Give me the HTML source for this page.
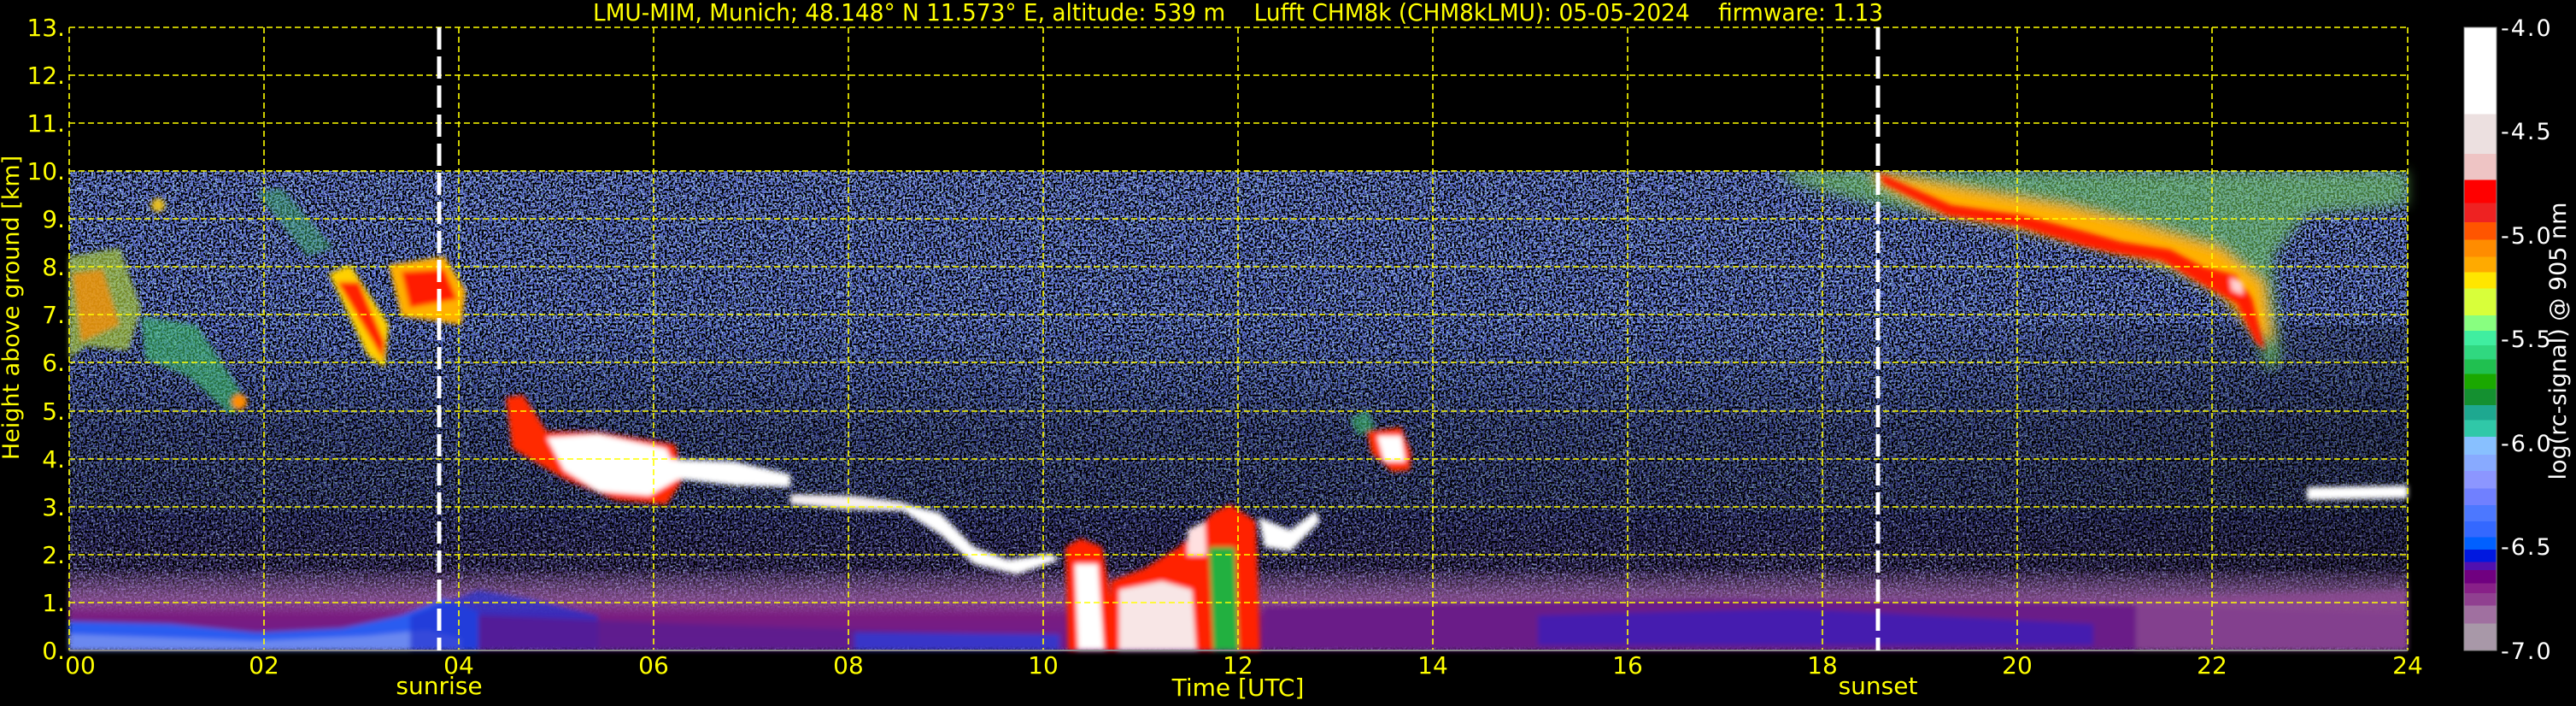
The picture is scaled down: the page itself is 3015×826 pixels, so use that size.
<!DOCTYPE html>
<html><head><meta charset="utf-8"><style>
html,body{margin:0;padding:0;background:#000;}
svg{display:block;}
text{font-family:"DejaVu Sans","Liberation Sans",sans-serif;fill:#ffff00;}
</style></head><body>
<svg width="3015" height="826" viewBox="0 0 3015 826" xmlns="http://www.w3.org/2000/svg">
<defs>
<linearGradient id="bg" x1="0" y1="200" x2="0" y2="761" gradientUnits="userSpaceOnUse">
<stop offset="0" stop-color="#5868c8"/><stop offset="0.45" stop-color="#4c5cc0"/>
<stop offset="0.72" stop-color="#3a3c90"/><stop offset="0.86" stop-color="#4a3478"/>
<stop offset="1" stop-color="#4a3478"/></linearGradient>
<linearGradient id="dk" x1="0" y1="380" x2="0" y2="720" gradientUnits="userSpaceOnUse">
<stop offset="0" stop-color="#000" stop-opacity="0"/><stop offset="0.35" stop-color="#000" stop-opacity="0.25"/>
<stop offset="0.8" stop-color="#000" stop-opacity="0.25"/><stop offset="1" stop-color="#000" stop-opacity="0"/></linearGradient>
<linearGradient id="dk2" x1="2150" y1="0" x2="2818" y2="0" gradientUnits="userSpaceOnUse">
<stop offset="0" stop-color="#000" stop-opacity="0"/><stop offset="1" stop-color="#000" stop-opacity="0.25"/></linearGradient>
<linearGradient id="cb" x1="0" y1="32" x2="0" y2="761" gradientUnits="userSpaceOnUse">
<stop offset="0" stop-color="#fff"/><stop offset=".139" stop-color="#fff"/>
<stop offset=".139" stop-color="#ece0e0"/><stop offset=".203" stop-color="#ece0e0"/>
<stop offset=".203" stop-color="#eec4c4"/><stop offset=".245" stop-color="#eec4c4"/>
<stop offset=".245" stop-color="#ff0000"/><stop offset=".282" stop-color="#ff0000"/>
<stop offset=".282" stop-color="#ee2222"/><stop offset=".313" stop-color="#ee2222"/>
<stop offset=".313" stop-color="#ff5500"/><stop offset=".341" stop-color="#ff5500"/>
<stop offset=".341" stop-color="#ff8c00"/><stop offset=".368" stop-color="#ff8c00"/>
<stop offset=".368" stop-color="#ffaa00"/><stop offset=".393" stop-color="#ffaa00"/>
<stop offset=".393" stop-color="#ffe600"/><stop offset=".419" stop-color="#ffe600"/>
<stop offset=".419" stop-color="#d8ff3a"/><stop offset=".462" stop-color="#d8ff3a"/>
<stop offset=".462" stop-color="#88ff80"/><stop offset=".487" stop-color="#88ff80"/>
<stop offset=".487" stop-color="#40eea0"/><stop offset=".510" stop-color="#40eea0"/>
<stop offset=".510" stop-color="#30d880"/><stop offset=".533" stop-color="#30d880"/>
<stop offset=".533" stop-color="#20c050"/><stop offset=".556" stop-color="#20c050"/>
<stop offset=".556" stop-color="#1aa800"/><stop offset=".580" stop-color="#1aa800"/>
<stop offset=".580" stop-color="#149030"/><stop offset=".606" stop-color="#149030"/>
<stop offset=".606" stop-color="#1ea890"/><stop offset=".630" stop-color="#1ea890"/>
<stop offset=".630" stop-color="#30c8a8"/><stop offset=".657" stop-color="#30c8a8"/>
<stop offset=".657" stop-color="#88c0ff"/><stop offset=".686" stop-color="#88c0ff"/>
<stop offset=".686" stop-color="#88aaff"/><stop offset=".712" stop-color="#88aaff"/>
<stop offset=".712" stop-color="#8c96ff"/><stop offset=".740" stop-color="#8c96ff"/>
<stop offset=".740" stop-color="#7080ff"/><stop offset=".767" stop-color="#7080ff"/>
<stop offset=".767" stop-color="#4c78ff"/><stop offset=".793" stop-color="#4c78ff"/>
<stop offset=".793" stop-color="#3468ff"/><stop offset=".818" stop-color="#3468ff"/>
<stop offset=".818" stop-color="#0060ff"/><stop offset=".838" stop-color="#0060ff"/>
<stop offset=".838" stop-color="#0018e0"/><stop offset=".858" stop-color="#0018e0"/>
<stop offset=".858" stop-color="#5010b0"/><stop offset=".871" stop-color="#5010b0"/>
<stop offset=".871" stop-color="#700080"/><stop offset=".892" stop-color="#700080"/>
<stop offset=".892" stop-color="#882088"/><stop offset=".908" stop-color="#882088"/>
<stop offset=".908" stop-color="#904090"/><stop offset=".928" stop-color="#904090"/>
<stop offset=".928" stop-color="#a070a0"/><stop offset=".957" stop-color="#a070a0"/>
<stop offset=".957" stop-color="#a898a8"/><stop offset="1" stop-color="#a898a8"/>
</linearGradient>
<linearGradient id="bl" x1="0" y1="660" x2="0" y2="761" gradientUnits="userSpaceOnUse">
<stop offset="0" stop-color="#9a70a8" stop-opacity="0"/><stop offset="0.4" stop-color="#9a5aa0" stop-opacity="0.75"/>
<stop offset="0.6" stop-color="#7a1a80"/><stop offset="1" stop-color="#6a1a90"/></linearGradient>
<filter id="blk" x="0" y="0" width="100%" height="100%">
<feTurbulence type="fractalNoise" baseFrequency="0.42" numOctaves="1" seed="4"/>
<feColorMatrix type="matrix" values="0 0 0 0 0  0 0 0 0 0  0 0 0 0 0  -12 0 0 0 6.2"/></filter>
<filter id="blu" x="0" y="0" width="100%" height="100%">
<feTurbulence type="fractalNoise" baseFrequency="0.45" numOctaves="1" seed="11"/>
<feColorMatrix type="matrix" values="0 0 0 0 0.45  0 0 0 0 0.6  0 0 0 0 1  12 0 0 0 -6.6"/></filter>
<filter id="grn" x="0" y="0" width="100%" height="100%">
<feTurbulence type="fractalNoise" baseFrequency="0.5" numOctaves="1" seed="23"/>
<feColorMatrix type="matrix" values="0 0 0 0 0.3  0 0 0 0 0.85  0 0 0 0 0.5  14 0 0 0 -8.4"/></filter>
<filter id="blr"><feGaussianBlur stdDeviation="3"/></filter>
<filter id="blr2"><feGaussianBlur stdDeviation="7"/></filter>
</defs>

<rect x="81" y="200" width="2737" height="561" fill="url(#bg)"/>
<rect x="81" y="200" width="2737" height="561" filter="url(#blu)" opacity="0.8"/>
<rect x="81" y="200" width="2737" height="400" filter="url(#grn)" opacity="0.6"/>
<rect x="81" y="200" width="2737" height="561" filter="url(#blk)"/>
<rect x="81" y="380" width="2737" height="340" fill="url(#dk)"/>
<rect x="2150" y="380" width="668" height="330" fill="url(#dk2)"/>
<g filter="url(#blr)">
<rect x="81" y="668" width="2737" height="93" fill="url(#bl)"/>
<path d="M81 727 L200 730 L300 740 L400 735 L470 720 L520 700 L560 715 L560 761 L81 761Z" fill="#2a5cf0"/>
<path d="M81 742 L300 750 L430 744 L500 737 L540 747 L540 761 L81 761Z" fill="#6a88f0"/>
<path d="M480 720 L560 690 L620 700 L700 720 L700 761 L480 761Z" fill="#2030d0" opacity="0.7"/>
<path d="M560 720 L800 730 L1100 740 L1240 745 L1240 761 L560 761Z" fill="#5a1a90" opacity="0.8"/>
<path d="M1000 740 L1240 742 L1240 761 L1000 761Z" fill="#2a40e0" opacity="0.7"/>
<path d="M1480 710 L2000 700 L2400 705 L2818 720 L2818 761 L1480 761Z" fill="#6a1a88"/>
<path d="M1800 720 L2100 712 L2450 730 L2450 755 L1800 755Z" fill="#3420c0" opacity="0.7"/>
<path d="M2500 700 L2818 690 L2818 761 L2500 761Z" fill="#8a4a90" opacity="0.8"/>
</g>
<g filter="url(#blr)">
<path d="M81 300 L140 290 L165 360 L150 410 L100 405 L81 420Z" fill="#a8c840" opacity="0.7"/>
<path d="M85 320 L120 315 L140 380 L95 400Z" fill="#ff8a00" opacity="0.7"/>
<path d="M165 370 L230 380 L290 470 L270 485 L220 440 L170 420Z" fill="#40c070" opacity="0.6"/>
<circle cx="280" cy="470" r="9" fill="#ff8c00"/>
<path d="M300 225 L330 220 L390 290 L360 300Z" fill="#40b070" opacity="0.5"/>
<circle cx="185" cy="240" r="8" fill="#e8c020"/>
<path d="M385 320 L410 310 L455 380 L450 430 L430 415Z" fill="#ffd000"/>
<path d="M395 330 L420 330 L450 400 L448 420Z" fill="#ff2000"/>
<path d="M455 310 L520 300 L545 340 L540 380 L470 370Z" fill="#ffb000"/>
<path d="M470 318 L520 315 L535 350 L480 360Z" fill="#ff1a00"/>
<path d="M592 465 L612 462 L640 505 L700 505 L790 520 L800 560 L780 590 L720 585 L660 560 L600 525Z" fill="#ff2a00"/>
<path d="M640 512 L700 508 L780 525 L795 560 L760 580 L700 575 L660 550Z" fill="#ffffff"/>
<path d="M780 537 L860 540 L925 555 L925 570 L860 568 L790 560Z" fill="#ffffff"/>
<path d="M925 578 L1000 580 L1060 588 L1060 598 L990 596 L925 590Z" fill="#f6f0f0"/>
<path d="M1060 590 L1100 600 L1140 640 L1180 655 L1230 648 L1240 655 L1190 672 L1140 660 L1100 625 L1060 600Z" fill="#ffffff"/>
<path d="M1247 640 L1265 630 L1290 640 L1300 700 L1305 761 L1250 761Z" fill="#ff2000"/>
<path d="M1258 660 L1285 660 L1292 760 L1262 760Z" fill="#ffffff"/>
<path d="M1300 680 L1340 665 L1380 640 L1420 600 L1440 590 L1470 610 L1475 761 L1300 761Z" fill="#ff2000"/>
<path d="M1310 690 L1360 680 L1395 690 L1400 761 L1310 761Z" fill="#f8e6e6"/>
<path d="M1390 620 L1410 610 L1412 650 L1390 650Z" fill="#ffe0e0"/>
<path d="M1415 640 L1445 640 L1450 761 L1420 761Z" fill="#20b040"/>
<path d="M1473 605 L1510 620 L1540 598 L1545 610 L1510 645 L1480 640Z" fill="#ffffff"/>
<path d="M1600 505 L1640 500 L1652 530 L1650 550 L1630 552 L1605 530Z" fill="#ff3000"/>
<path d="M1612 510 L1640 510 L1645 540 L1620 540Z" fill="#ffffff"/>
<path d="M1580 490 L1600 480 L1610 500 L1590 510Z" fill="#40c070" opacity="0.6"/>
<path d="M2700 570 L2818 568 L2818 583 L2700 585Z" fill="#ffffff"/>
</g>
<g filter="url(#blr2)">
<path d="M2080 200 L2818 200 L2818 240 L2700 250 L2660 300 L2670 420 L2655 435 L2620 350 L2560 325 L2500 300 L2400 275 L2290 255 L2200 240 L2100 215Z" fill="#70c860" opacity="0.6"/>
<path d="M2190 200 L2300 220 L2420 240 L2500 260 L2600 290 L2650 330 L2660 400 L2640 390 L2600 345 L2540 310 L2450 288 L2360 266 L2270 250 L2200 215Z" fill="#ffb000"/>
</g>
<g filter="url(#blr)">
<path d="M2200 203 L2284 240 L2368 252 L2444 272 L2483 283 L2540 292 L2578 312 L2617 322 L2636 350 L2651 410 L2640 400 L2618 355 L2570 328 L2530 305 L2470 295 L2440 288 L2360 264 L2280 252 L2205 215Z" fill="#ff1a00"/>
<path d="M2610 325 L2625 330 L2625 345 L2612 340Z" fill="#ffd0d0"/>
</g>
<rect x="81" y="32" width="2737" height="168" fill="#000"/>
<g stroke="#ffff00" stroke-width="1.6" stroke-dasharray="7 4" fill="none">
<path d="M81 32H2818M81 88H2818M81 144H2818M81 200H2818M81 256H2818M81 312H2818M81 368H2818M81 424H2818M81 481H2818M81 537H2818M81 593H2818M81 649H2818M81 705H2818"/>
<path d="M309 32V761M537 32V761M765 32V761M993 32V761M1221 32V761M1449 32V761M1677 32V761M1905 32V761M2133 32V761M2361 32V761M2589 32V761M2818 32V761M81 32V761"/>
</g>
<path d="M81 761H2818" stroke="#888" stroke-width="2"/>
<g stroke="#fff" stroke-width="5" stroke-dasharray="26 8">
<path d="M514 32V761"/><path d="M2198 32V761"/>
</g>
<rect x="2884" y="32" width="38" height="729" fill="url(#cb)" stroke="#888" stroke-width="1"/>
<g font-size="27">
<text x="2927" y="42" style="fill:#fff;letter-spacing:2px">-4.0</text>
<text x="2927" y="163" style="fill:#fff;letter-spacing:2px">-4.5</text>
<text x="2927" y="285" style="fill:#fff;letter-spacing:2px">-5.0</text>
<text x="2927" y="406" style="fill:#fff;letter-spacing:2px">-5.5</text>
<text x="2927" y="528" style="fill:#fff;letter-spacing:2px">-6.0</text>
<text x="2927" y="649" style="fill:#fff;letter-spacing:2px">-6.5</text>
<text x="2927" y="771" style="fill:#fff;letter-spacing:2px">-7.0</text>
</g>
<text transform="translate(3003 399) rotate(-90)" text-anchor="middle" font-size="27" style="fill:#fff">log(rc-signal) @ 905 nm</text>
<text x="694" y="24" font-size="28" textLength="1510" lengthAdjust="spacingAndGlyphs" xml:space="preserve" style="white-space:pre">LMU-MIM, Munich; 48.148° N 11.573° E, altitude: 539 m    Lufft CHM8k (CHM8kLMU): 05-05-2024    firmware: 1.13</text>
<g font-size="28" text-anchor="end">
<text x="76" y="42">13.</text><text x="76" y="98">12.</text><text x="76" y="154">11.</text>
<text x="76" y="210">10.</text><text x="76" y="266">9.</text><text x="76" y="322">8.</text>
<text x="76" y="378">7.</text><text x="76" y="434">6.</text><text x="76" y="491">5.</text>
<text x="76" y="547">4.</text><text x="76" y="603">3.</text><text x="76" y="659">2.</text>
<text x="76" y="715">1.</text><text x="76" y="771">0.</text>
</g>
<text transform="translate(22 360) rotate(-90)" text-anchor="middle" font-size="27">Height above ground [km]</text>
<g font-size="28" text-anchor="middle">
<text x="94" y="788">00</text><text x="309" y="788">02</text><text x="537" y="788">04</text>
<text x="765" y="788">06</text><text x="993" y="788">08</text><text x="1221" y="788">10</text>
<text x="1449" y="788">12</text><text x="1677" y="788">14</text><text x="1905" y="788">16</text>
<text x="2133" y="788">18</text><text x="2361" y="788">20</text><text x="2589" y="788">22</text>
<text x="2818" y="788">24</text>
<text x="514" y="812">sunrise</text><text x="2198" y="812">sunset</text>
<text x="1449" y="814">Time [UTC]</text>
</g>
</svg>
</body></html>
